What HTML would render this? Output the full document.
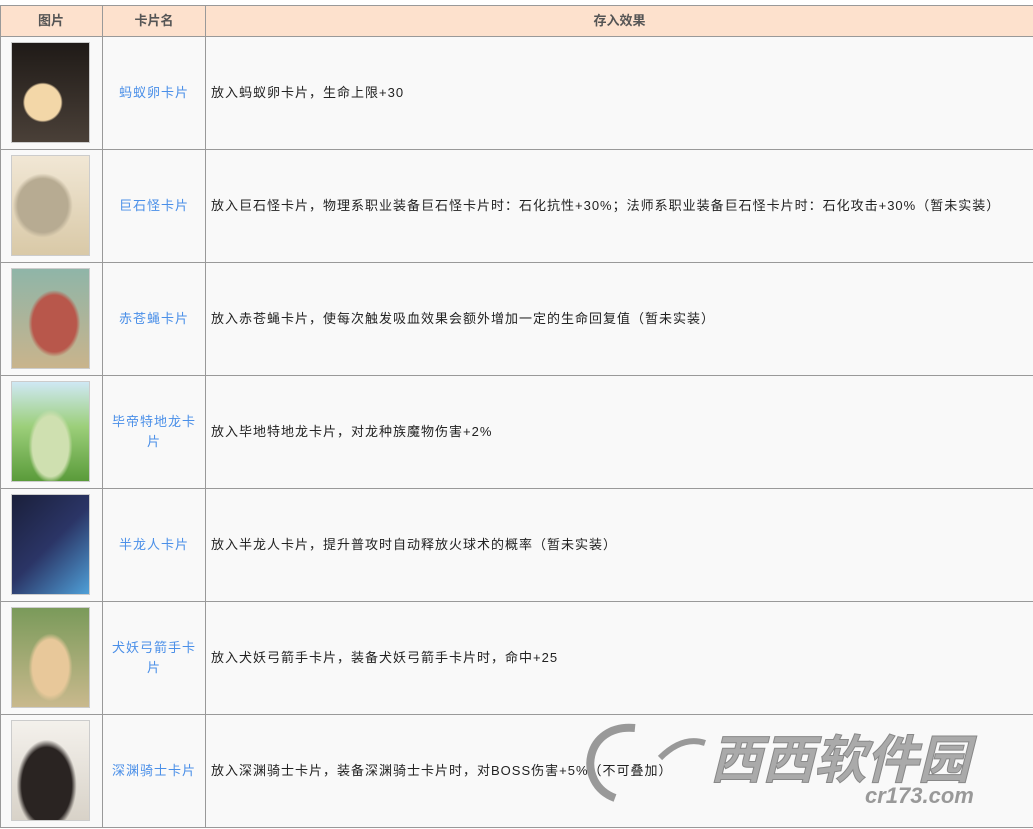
<!DOCTYPE html>
<html><head><meta charset="utf-8"><style>
body{margin:0;width:1033px;height:829px;background:#fff;position:relative;overflow:hidden;font-family:"Liberation Sans","Noto Sans CJK SC",sans-serif;font-size:13px;}
.h{position:absolute;background:#999;height:1px;left:0;width:1033px}
.v{position:absolute;background:#999;width:1px;top:5px;height:823px}
.hd{position:absolute;top:6px;height:30px;background:#fde1cd}
.cell{position:absolute;background:#f9f9f9}
.t{position:absolute;font-weight:bold;color:#555;top:6px;line-height:30px;text-align:center}
.nm{position:absolute;left:103px;width:102px;text-align:center;color:#4a8fe8;line-height:20px;letter-spacing:1px}
.ef{position:absolute;left:211px;color:#222;line-height:20px;white-space:nowrap;letter-spacing:1px}
.img{position:absolute;left:11px;width:79px;height:101px;border:1px solid #ccc;box-sizing:border-box}
</style></head><body>
<div class="hd" style="left:0;width:1033px"></div>
<div class="cell" style="left:0;top:37px;width:1033px;height:790px"></div>
<div class="t" style="left:0;width:102px">图片</div>
<div class="t" style="left:103px;width:102px">卡片名</div>
<div class="t" style="left:206px;width:827px">存入效果</div>

<div class="h" style="top:5px"></div><div class="h" style="top:36px"></div><div class="h" style="top:149px"></div><div class="h" style="top:262px"></div><div class="h" style="top:375px"></div><div class="h" style="top:488px"></div><div class="h" style="top:601px"></div><div class="h" style="top:714px"></div><div class="h" style="top:827px"></div>
<div class="v" style="left:0"></div><div class="v" style="left:102px"></div><div class="v" style="left:205px"></div>

<div class="img" style="top:42px;background:radial-gradient(circle at 40% 60%,#f3d7a8 0 18px,transparent 20px),linear-gradient(#1f1a17,#4a4038)"></div>
<div class="img" style="top:155px;background:radial-gradient(ellipse at 40% 50%,#b7ab92 0 25px,transparent 30px),linear-gradient(#f1e7d5,#d9c9a7)"></div>
<div class="img" style="top:268px;background:radial-gradient(ellipse at 55% 55%,#b8574b 0 22px,transparent 26px),linear-gradient(#8fb5a8,#c9b48c)"></div>
<div class="img" style="top:381px;background:radial-gradient(ellipse at 50% 65%,#cfe0b0 0 18px,transparent 22px),linear-gradient(#cfe8f4 0,#9ccf7a 45%,#5a9b3a)"></div>
<div class="img" style="top:494px;background:linear-gradient(135deg,#1a1f3a,#2b3566 50%,#4fa0d8)"></div>
<div class="img" style="top:607px;background:radial-gradient(ellipse at 50% 60%,#e8c89a 0 18px,transparent 22px),linear-gradient(#7a9a5a,#c9b98d)"></div>
<div class="img" style="top:720px;background:radial-gradient(ellipse at 45% 65%,#2a2422 0 25px,transparent 30px),linear-gradient(#f4f1ec,#d8d2c8)"></div>

<div class="nm" style="top:83px">蚂蚁卵卡片</div>
<div class="nm" style="top:196px">巨石怪卡片</div>
<div class="nm" style="top:309px">赤苍蝇卡片</div>
<div class="nm" style="top:412px">毕帝特地龙卡<br>片</div>
<div class="nm" style="top:535px">半龙人卡片</div>
<div class="nm" style="top:638px">犬妖弓箭手卡<br>片</div>
<div class="nm" style="top:761px">深渊骑士卡片</div>

<div class="ef" style="top:83px">放入蚂蚁卵卡片，生命上限+30</div>
<div class="ef" style="top:196px">放入巨石怪卡片，物理系职业装备巨石怪卡片时：石化抗性+30%；法师系职业装备巨石怪卡片时：石化攻击+30%（暂未实装）</div>
<div class="ef" style="top:309px">放入赤苍蝇卡片，使每次触发吸血效果会额外增加一定的生命回复值（暂未实装）</div>
<div class="ef" style="top:422px">放入毕地特地龙卡片，对龙种族魔物伤害+2%</div>
<div class="ef" style="top:535px">放入半龙人卡片，提升普攻时自动释放火球术的概率（暂未实装）</div>
<div class="ef" style="top:648px">放入犬妖弓箭手卡片，装备犬妖弓箭手卡片时，命中+25</div>
<div class="ef" style="top:761px">放入深渊骑士卡片，装备深渊骑士卡片时，对BOSS伤害+5%（不可叠加）</div>

<svg style="position:absolute;left:565px;top:703px" width="468" height="126">
<path d="M70 25 C20 20 10 80 50 95" stroke="#999" stroke-width="8" fill="none"/>
<path d="M95 55 C110 40 125 35 140 40" stroke="#999" stroke-width="6" fill="none"/>
<text x="145" y="75" font-family="Liberation Sans,Noto Sans CJK SC,sans-serif" font-size="52" font-style="italic" font-weight="bold" fill="#aaa" stroke="#888" stroke-width="1">西西软件园</text>
<text x="300" y="100" font-family="Liberation Sans,sans-serif" font-size="22" font-style="italic" font-weight="bold" fill="#999">cr173.com</text>
</svg>
</body></html>
